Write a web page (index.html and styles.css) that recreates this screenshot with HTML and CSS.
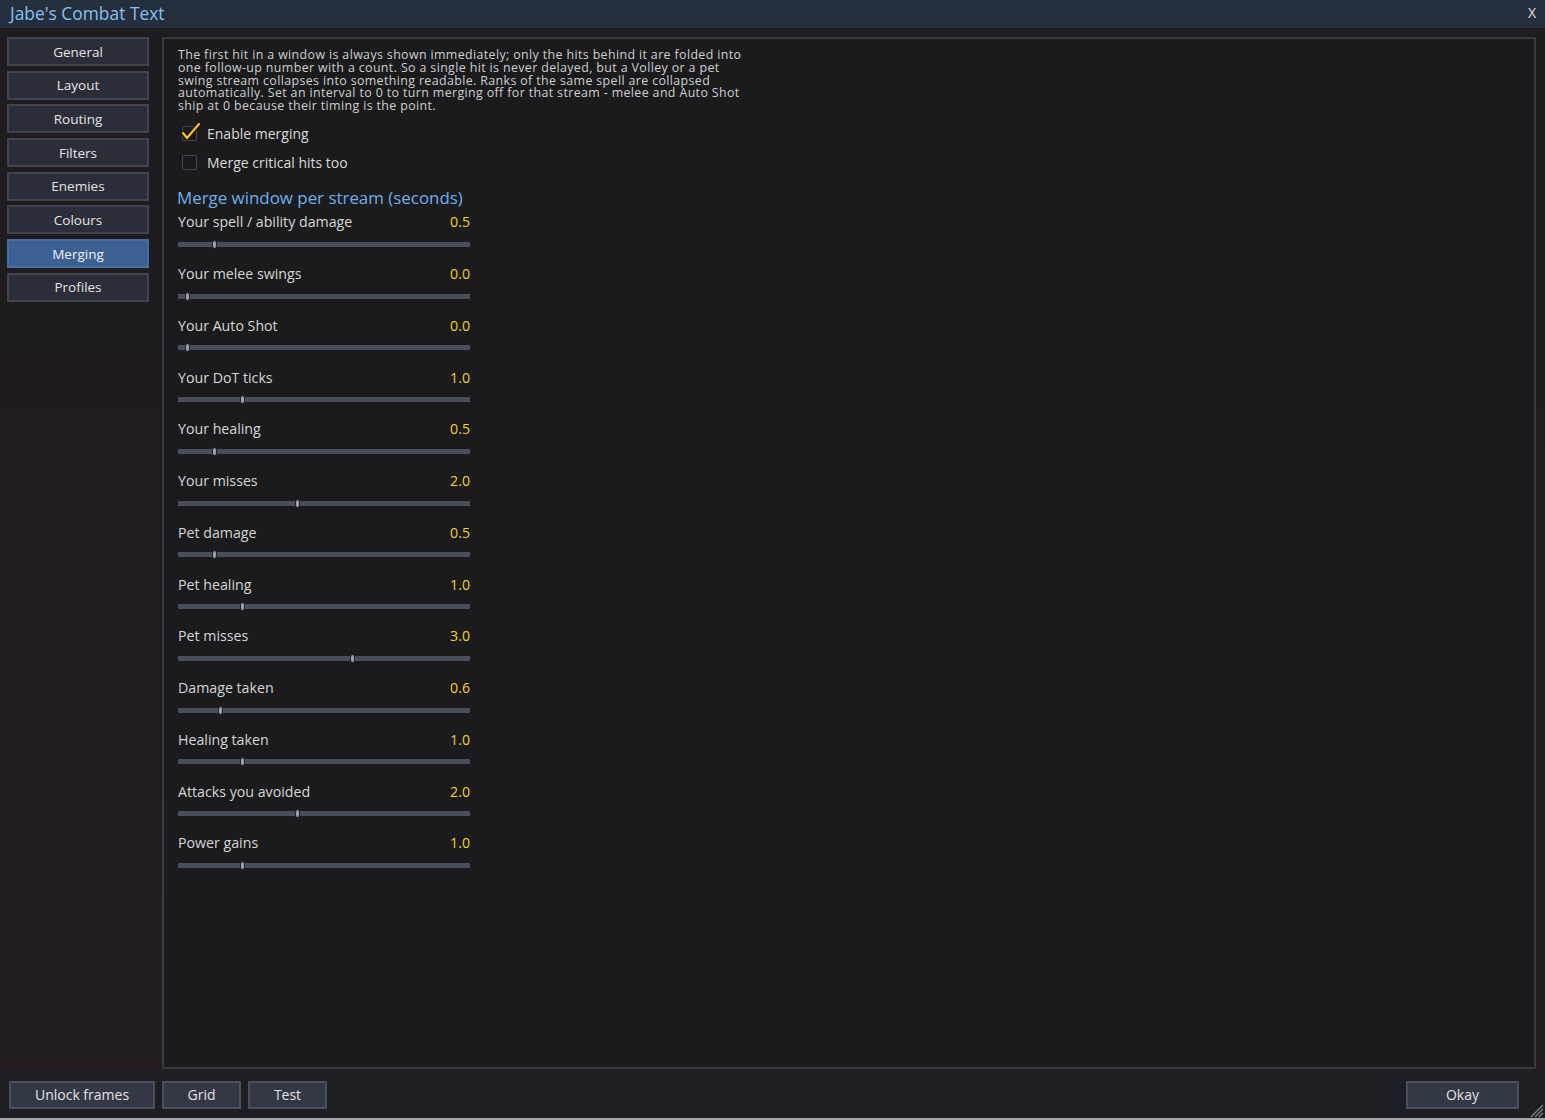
FILE: index.html
```html
<!DOCTYPE html>
<html lang="en">
<head>
<meta charset="utf-8">
<title>Jabe's Combat Text</title>
<link rel="stylesheet" href="styles.css">
</head>
<body>
<div class="window">
  <header class="titlebar">
    <span class="title">Jabe's Combat Text</span>
    <span class="close">X</span>
  </header>

  <div class="main">
    <nav class="sidebar">
      <button class="tab">General</button>
      <button class="tab">Layout</button>
      <button class="tab">Routing</button>
      <button class="tab">Filters</button>
      <button class="tab">Enemies</button>
      <button class="tab">Colours</button>
      <button class="tab active">Merging</button>
      <button class="tab">Profiles</button>
    </nav>

    <section class="panel">
      <p class="intro">The first hit in a window is always shown immediately; only the hits behind it are folded into<br>one follow-up number with a count. So a single hit is never delayed, but a Volley or a pet<br>swing stream collapses into something readable. Ranks of the same spell are collapsed<br>automatically. Set an interval to 0 to turn merging off for that stream - melee and Auto Shot<br>ship at 0 because their timing is the point.</p>

      <label class="check">
        <span class="box">
          <svg class="tick" viewBox="0 0 22 20" width="22" height="20">
            <polyline points="3,11 7,16 19,2" fill="none" stroke="#1a1405" stroke-width="4.5" stroke-linejoin="round" stroke-linecap="round"/>
            <polyline points="3,11 7,16 19,2" fill="none" stroke="#f2c520" stroke-width="2.2" stroke-linejoin="round" stroke-linecap="round"/>
          </svg>
        </span>
        <span class="check-label">Enable merging</span>
      </label>
      <label class="check">
        <span class="box"></span>
        <span class="check-label">Merge critical hits too</span>
      </label>

      <h2 class="section-title">Merge window per stream (seconds)</h2>

      <div class="sliders">
        <div class="slider"><div class="slider-head"><span>Your spell / ability damage</span><span class="value">0.5</span></div><div class="track"><span class="rail"><span class="thumb" style="--pos:10%"></span></span></div></div>
        <div class="slider"><div class="slider-head"><span>Your melee swings</span><span class="value">0.0</span></div><div class="track"><span class="rail"><span class="thumb" style="--pos:0%"></span></span></div></div>
        <div class="slider"><div class="slider-head"><span>Your Auto Shot</span><span class="value">0.0</span></div><div class="track"><span class="rail"><span class="thumb" style="--pos:0%"></span></span></div></div>
        <div class="slider"><div class="slider-head"><span>Your DoT ticks</span><span class="value">1.0</span></div><div class="track"><span class="rail"><span class="thumb" style="--pos:20%"></span></span></div></div>
        <div class="slider"><div class="slider-head"><span>Your healing</span><span class="value">0.5</span></div><div class="track"><span class="rail"><span class="thumb" style="--pos:10%"></span></span></div></div>
        <div class="slider"><div class="slider-head"><span>Your misses</span><span class="value">2.0</span></div><div class="track"><span class="rail"><span class="thumb" style="--pos:40%"></span></span></div></div>
        <div class="slider"><div class="slider-head"><span>Pet damage</span><span class="value">0.5</span></div><div class="track"><span class="rail"><span class="thumb" style="--pos:10%"></span></span></div></div>
        <div class="slider"><div class="slider-head"><span>Pet healing</span><span class="value">1.0</span></div><div class="track"><span class="rail"><span class="thumb" style="--pos:20%"></span></span></div></div>
        <div class="slider"><div class="slider-head"><span>Pet misses</span><span class="value">3.0</span></div><div class="track"><span class="rail"><span class="thumb" style="--pos:60%"></span></span></div></div>
        <div class="slider"><div class="slider-head"><span>Damage taken</span><span class="value">0.6</span></div><div class="track"><span class="rail"><span class="thumb" style="--pos:12%"></span></span></div></div>
        <div class="slider"><div class="slider-head"><span>Healing taken</span><span class="value">1.0</span></div><div class="track"><span class="rail"><span class="thumb" style="--pos:20%"></span></span></div></div>
        <div class="slider"><div class="slider-head"><span>Attacks you avoided</span><span class="value">2.0</span></div><div class="track"><span class="rail"><span class="thumb" style="--pos:40%"></span></span></div></div>
        <div class="slider"><div class="slider-head"><span>Power gains</span><span class="value">1.0</span></div><div class="track"><span class="rail"><span class="thumb" style="--pos:20%"></span></span></div></div>
      </div>
    </section>
  </div>

  <footer class="footer">
    <button class="fbtn unlock">Unlock frames</button>
    <button class="fbtn grid">Grid</button>
    <button class="fbtn test">Test</button>
    <button class="fbtn okay">Okay</button>
    <svg class="grip" viewBox="0 0 16 16" width="16" height="16">
      <path d="M15 3 L3 15 M15 7 L7 15 M15 11 L11 15" stroke="#7c7f88" stroke-width="1.4" fill="none"/>
    </svg>
  </footer>
</div>
</body>
</html>
```

FILE: styles.css
```css
* {
  box-sizing: border-box;
}

body {
  margin: 0;
  width: 1545px;
  height: 1120px;
  overflow: hidden;
  background: #1e1b1e;
  font-family: "Open Sans", "Lato", sans-serif;
  color: #d4d4d4;
}

.window {
  display: flex;
  flex-direction: column;
  height: 1120px;
}

/* title bar */
.titlebar {
  flex: none;
  height: 28px;
  background: #252e3d;
  display: flex;
  align-items: center;
  justify-content: space-between;
  padding: 0 9px 3px 10px;
}

.title {
  color: #86c2ee;
  font-size: 17.4px;
}

.close {
  color: #e0e0e0;
  font-size: 14px;
}

/* body: tabs on the left, options panel on the right */
.main {
  flex: 1;
  display: flex;
  padding-top: 9px;
  background: linear-gradient(180deg, #1e1c1f 0%, #201c1f 60%, #231d21 100%);
}

.sidebar {
  flex: none;
  width: 142px;
  margin: 0 13px 0 7px;
  display: flex;
  flex-direction: column;
  gap: 4.7px;
}

.tab {
  height: 29px;
  padding: 0;
  background: #2b2e38;
  border: 2px solid #41444f;
  color: #e4e4e4;
  font-family: inherit;
  font-size: 13.5px;
}

.tab.active {
  background: #3a6192;
  border-color: #4a6e9c;
  color: #eef2f6;
}

.panel {
  flex: none;
  width: 1374px;
  height: 1032px;
  background: #1b1b1e;
  border: 2px solid #383a42;
  padding: 10px 14px 0 14px;
}

.intro {
  margin: 0;
  font-size: 12.4px;
  letter-spacing: 0.38px;
  line-height: 12.8px;
  color: #cfcfcf;
}

.check {
  display: flex;
  align-items: center;
  height: 28.5px;
  padding-left: 4px;
}

.check:first-of-type {
  margin-top: 6.5px;
}

.box {
  position: relative;
  flex: none;
  width: 15px;
  height: 15px;
  background: #19191b;
  border: 1px solid #44464f;
  border-radius: 2px;
  margin-right: 10px;
}

.tick {
  position: absolute;
  left: -3px;
  top: -5px;
}

.check-label {
  font-size: 14px;
  color: #dadada;
}

.section-title {
  margin: 12px 0 5px -1px;
  font-size: 16.9px;
  font-weight: normal;
  line-height: 20px;
  color: #6eb0ea;
}

.sliders {
  width: 292px;
  display: flex;
  flex-direction: column;
}

.slider {
  height: 51.75px;
}

.slider-head {
  display: flex;
  justify-content: space-between;
  font-size: 14.2px;
  line-height: 18px;
  color: #d6d6d6;
}

.value {
  color: #f2d02b;
}

.track {
  display: block;
  margin-top: 10.5px;
  height: 5px;
  background: #4a4e5a;
  padding: 0 8px 0 9px;
}

.rail {
  display: block;
  position: relative;
  height: 5px;
}

.thumb {
  position: absolute;
  left: var(--pos);
  top: -2px;
  width: 5px;
  height: 9px;
  margin-left: -2.5px;
  background: #9ea2ac;
  border: 1px solid #22242a;
  border-radius: 50% / 40%;
}

/* bottom button bar */
.footer {
  position: relative;
  flex: none;
  height: 51px;
  display: flex;
  align-items: flex-start;
  gap: 7px;
  padding: 12px 26px 0 9px;
  background: #1c1e23;
  border-bottom: 2px solid #a8a8a8;
}

.fbtn {
  height: 28px;
  padding: 0 0 1px;
  background: #333845;
  border: 2px solid #4a4f5e;
  color: #e2e2e2;
  font-family: inherit;
  font-size: 14px;
}

.unlock { width: 146px; }
.grid { width: 79px; }
.test { width: 79px; }
.okay { width: 113px; margin-left: auto; }

.grip {
  position: absolute;
  right: 1px;
  bottom: 0;
}
```
